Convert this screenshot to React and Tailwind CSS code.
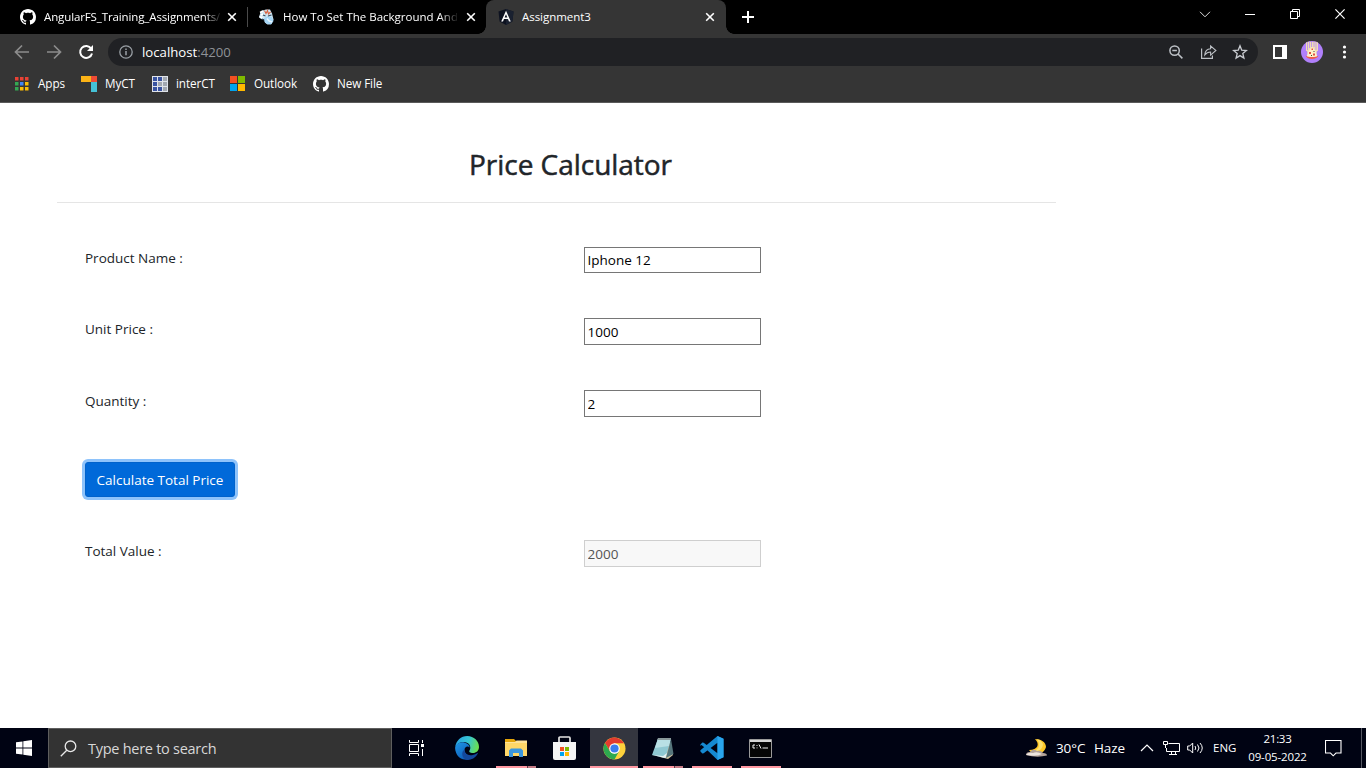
import React from "react";

const GITHUB =
  "M8 0C3.58 0 0 3.58 0 8c0 3.54 2.29 6.53 5.47 7.59.4.07.55-.17.55-.38 0-.19-.01-.82-.01-1.49-2.01.37-2.53-.49-2.69-.94-.09-.23-.48-.94-.82-1.13-.28-.15-.68-.52-.01-.53.63-.01 1.08.58 1.23.82.72 1.21 1.87.87 2.33.66.07-.52.28-.87.51-1.07-1.78-.2-3.64-.89-3.64-3.95 0-.87.31-1.59.82-2.15-.08-.2-.36-1.02.08-2.12 0 0 .67-.21 2.2.82.64-.18 1.32-.27 2-.27s1.36.09 2 .27c1.53-1.04 2.2-.82 2.2-.82.44 1.1.16 1.92.08 2.12.51.56.82 1.27.82 2.15 0 3.07-1.87 3.75-3.65 3.95.29.25.54.73.54 1.48 0 1.07-.01 1.93-.01 2.2 0 .21.15.46.55.38A8.01 8.01 0 0 0 16 8c0-4.42-3.58-8-8-8z";

function Svg({ w, h = w, vb, className = "", children }) {
  return (
    <svg width={w} height={h} viewBox={vb || `0 0 ${w} ${h}`} fill="none" className={"block shrink-0 " + className}>
      {children}
    </svg>
  );
}

function Github() {
  return (
    <Svg w={16}>
      <path d={GITHUB} fill="#fff" />
    </Svg>
  );
}

function CloseTab() {
  return (
    <Svg w={10}>
      <path d="M1.2 1.2 8.8 8.8M8.8 1.2 1.2 8.8" stroke="#fff" strokeWidth="1.6" />
    </Svg>
  );
}

function TabStrip() {
  return (
    <div className="flex h-[34px] w-full bg-black text-[11.5px] leading-[34px] text-white">
      <div className="flex w-[247px] items-center pl-5">
        <Github />
        <div className="ml-2 w-[176px] overflow-hidden whitespace-nowrap tracking-[-0.12px] [mask-image:linear-gradient(to_right,black_160px,transparent_178px)]">
          AngularFS_Training_Assignments/
        </div>
        <div className="ml-[7px]"><CloseTab /></div>
      </div>
      <div className="mt-[7px] h-5 w-px bg-[#4a4a4a]" />
      <div className="flex w-[238px] items-center pl-[11px]">
        <Svg w={16}>
          <path d="M2 2 7 .5h4l2 4 1.500 6-2 4.500-4 .5-4-3L0 8z" fill="#cfe6f3" />
          <path d="m5 9 4-2 4 1 1.500 4-2.500 3.500-4-.5-3-3z" fill="#a6d6f5" />
          <path d="M0 10.500 5 10l1 6H0zM0 4l2-3H0z" fill="#000" />
          <path d="M1 3.500 4 2M.5 8l3 .5M2 6l2-1" stroke="#fff" strokeWidth="1.5" />
          <path d="m5.500 1.500 1.500 3 1.500-3 1 3.500 2-2" stroke="#d9623f" strokeWidth="1.1" />
          <path d="m4 6 2.500 1M9 7l3.500-1M3 10l2 1" stroke="#34495c" strokeWidth="1.1" />
          <path d="m8 9.500 2 2.500 3 1" stroke="#eaf7ff" strokeWidth="1.4" />
        </Svg>
        <div className="ml-2 w-[174px] overflow-hidden whitespace-nowrap [mask-image:linear-gradient(to_right,black_156px,transparent_176px)]">
          How To Set The Background And
        </div>
        <div className="ml-[9px]"><CloseTab /></div>
      </div>
      <div className="relative flex w-60 items-center rounded-t-lg bg-[#353535] pl-3">
        <div className="absolute bottom-0 -left-2 h-2 w-2 bg-[radial-gradient(circle_at_0_0,#000_7.5px,#353535_8px)]" />
        <div className="absolute -right-2 bottom-0 h-2 w-2 bg-[radial-gradient(circle_at_100%_0,#000_7.5px,#353535_8px)]" />
        <Svg w={16}>
          <path d="m8 0 7.500 2.600-1.100 10L8 16l-6.400-3.400L.5 2.600z" fill="#0d1220" />
          <path d="m8 0 7.500 2.600-1.100 10L8 16z" fill="#1a2130" />
          <path d="M8 1.800 3.200 12.500H5l1-2.400h4l1 2.400h1.800zm0 3.400 1.400 3.400H6.600z" fill="#fff" fillRule="evenodd" />
        </Svg>
        <span className="ml-2 w-[174px] tracking-[-0.05px]">Assignment3</span>
        <div className="ml-[9px]"><CloseTab /></div>
      </div>
      <div className="flex w-[44px] items-center justify-center">
        <Svg w={12}>
          <path d="M6 0v12M0 6h12" stroke="#fff" strokeWidth="2" />
        </Svg>
      </div>
      <div className="ml-auto flex w-[180px] items-start pt-2">
        <div className="flex w-[40px] justify-center pt-[3px]">
          <Svg w={12} h={7}><path d="m1 .8 5 5 5-5" stroke="#ddd" /></Svg>
        </div>
        <div className="flex w-[52px] justify-center pt-[6px]">
          <div className="h-px w-[10px] bg-white" />
        </div>
        <div className="flex w-[40px] justify-center pt-px">
          <Svg w={10}><path d="M.5 2.500h7v7h-7zM2.500 2.500v-2h7v7h-2" stroke="#fff" /></Svg>
        </div>
        <div className="flex w-[52px] shrink-0 justify-center pt-px">
          <Svg w={10}><path d="m.4.4 9.200 9.200M9.600.4.4 9.600" stroke="#fff" strokeWidth="1.200" /></Svg>
        </div>
      </div>
    </div>
  );
}

function AddressRow() {
  return (
    <div className="flex h-9 w-full items-center pl-[14px]">
      <Svg w={16}><path d="M15 8H2M8 1.500 1.500 8 8 14.500" stroke="#8c8c8c" strokeWidth="1.7" /></Svg>
      <Svg w={16} className="ml-4"><path d="M1 8h13M8 1.500 14.500 8 8 14.500" stroke="#8c8c8c" strokeWidth="1.7" /></Svg>
      <Svg w={16} className="ml-4">
        <path d="M13.200 4.600A6 6 0 1 0 14 9.400" stroke="#fff" strokeWidth="2" />
        <path d="M15 1v6H9z" fill="#fff" />
      </Svg>
      <div className="ml-[14px] flex h-7 w-[1150px] items-center rounded-full bg-[#202124] pl-[11px]">
        <Svg w={14}>
          <circle cx="7" cy="7" r="6.200" stroke="#9aa0a6" strokeWidth="1.3" />
          <path d="M7 6v4.300M7 3.500V5" stroke="#9aa0a6" strokeWidth="1.5" />
        </Svg>
        <div className="ml-[9px] pt-px text-[13.2px] text-white">
          localhost<span className="text-[#8f9297]">:4200</span>
        </div>
        <Svg w={14} className="ml-auto">
          <circle cx="5.600" cy="5.600" r="4.700" stroke="#bdc1c6" strokeWidth="1.5" />
          <path d="M3.300 5.600h4.600M9 9l4.400 4.400" stroke="#bdc1c6" strokeWidth="1.5" />
        </Svg>
        <Svg w={16} className="ml-[18px]">
          <path d="M.6 4.500v9.900h10.800V11.500" stroke="#bdc1c6" strokeWidth="1.2" />
          <path d="M3.800 10.800c.3-3.800 2.300-5.800 5.800-6V1.900l5.300 4.600-5.300 4.600V8c-2.600 0-4.300.8-5.800 2.800z" stroke="#bdc1c6" strokeWidth="1.1" />
        </Svg>
        <Svg w={16} className="mr-[10px] ml-[15px]">
          <path d="m8 1.800 1.700 4.300 4.700.4-3.600 3 1.100 4.500L8 11.600 4.100 14l1.100-4.500-3.600-3 4.700-.4z" stroke="#c8cbd0" strokeWidth="1.3" />
        </Svg>
      </div>
      <Svg w={14} className="ml-[15px]">
        <path d="M0 0h14v14H0zm2 2v10h7V2z" fill="#fff" fillRule="evenodd" />
      </Svg>
      <Svg w={22} className="ml-[14px]">
        <circle cx="11" cy="11" r="11" fill="#b080fb" />
        <path d="M5 1.500 7 .8h8l2 .7V10h-1l-1 5H7l-1-5H5z" fill="#efdcb4" />
        <path d="M6.500 1v8M8.500 0v7M10.500 0v6M13 0v6M15 1v8" stroke="#b080fb" strokeWidth=".7" />
        <path d="m5.500 16 2-6L11 6l3.500 4 2 6z" fill="#fff0c9" />
        <path d="M8 11h2v2H8zM12 12.500h2v2h-2zM10.500 7.500H12V9h-1.500z" fill="#e25241" />
        <path d="M10 14h1v1h-1zM12.500 10h1v1h-1z" fill="#3a4a3a" />
        <path d="M4.500 14.500c1 4.500 12 4.500 13 0-3 2-10 2-13 0z" fill="#ef5a4c" />
      </Svg>
      <Svg w={5} h={14} className="ml-[19px]">
        <circle cx="2.500" cy="2" r="1.6" fill="#fff" />
        <circle cx="2.500" cy="7" r="1.6" fill="#fff" />
        <circle cx="2.500" cy="12" r="1.6" fill="#fff" />
      </Svg>
    </div>
  );
}

function Bookmark({ className, label, children }) {
  return (
    <div className={"flex items-center whitespace-nowrap " + className}>
      {children}
      <span>{label}</span>
    </div>
  );
}

function Bookmarks() {
  const dots = ["#e94235", "#e94235", "#e94235", "#34a853", "#4285f4", "#fbbc05", "#34a853", "#fbbc05", "#fbbc05"];
  return (
    <div className="flex h-[33px] w-full items-center border-b border-[#5a5a5a] pb-1 text-[11.7px] tracking-[-0.08px] text-white">
      <Bookmark className="ml-[15px] w-[66px] gap-[9px]" label="Apps">
        <Svg w={14}>
          {dots.map((c, i) => (
            <rect key={i} x={(i % 3) * 5} y={Math.floor(i / 3) * 5} width="3.500" height="3.500" fill={c} />
          ))}
        </Svg>
      </Bookmark>
      <Bookmark className="w-[71px] gap-2" label="MyCT">
        <Svg w={16}>
          <path d="M0 0h10v6H0z" fill="#fcb316" />
          <path d="M10 0h6v6h-6z" fill="#ee4b35" />
          <path d="M10 6h6v10h-6z" fill="#45c1d6" />
        </Svg>
      </Bookmark>
      <Bookmark className="w-[78px] gap-2" label="interCT">
        <Svg w={16}>
          <path d="M0 0h16v16H0z" fill="#dfe3ea" />
          <path d="M1 1h4v4H1zM6 1h4v4H6zM1 6h4v4H1zM1 11h4v4H1zM6 11h4v4H6z" fill="#3953a0" />
          <path d="M11 1h4v4h-4zM6 6h4v4H6zM11 6h4v4h-4zM11 11h4v4h-4z" fill="#a2a8b0" />
        </Svg>
      </Bookmark>
      <Bookmark className="w-[83px] gap-[9px]" label="Outlook">
        <Svg w={15}>
          <path d="M0 0h7v7H0z" fill="#f25022" />
          <path d="M8 0h7v7H8z" fill="#7fba00" />
          <path d="M0 8h7v7H0z" fill="#00a4ef" />
          <path d="M8 8h7v7H8z" fill="#ffb900" />
        </Svg>
      </Bookmark>
      <Bookmark className="gap-2" label="New File"><Github /></Bookmark>
    </div>
  );
}

function Field({ label, value, className, inputClass = "h-[27px] pt-px", disabled }) {
  return (
    <div className={"flex items-start text-[#212529] " + className}>
      <label className="w-[499px] pt-px text-[13.500px] leading-[21px]">{label}</label>
      <input
        readOnly
        disabled={disabled}
        defaultValue={value}
        className={
          "w-[177px] border border-[#767676] bg-white px-[2.5px] text-[13.500px] leading-[21px] text-black outline-none disabled:border-[#cfcfcf] disabled:bg-[#f8f8f8] disabled:text-[#545454] " +
          inputClass
        }
      />
    </div>
  );
}

function Calculator() {
  return (
    <main className="h-[625px] w-full bg-white">
      <div className="ml-[57px] w-[999px]">
        <div className="h-[100px] border-b border-[#e5e5e5] pt-[42px] pl-[412px]">
          <h1 className="text-[28px] leading-[39px] tracking-[-0.03px] whitespace-nowrap text-[#212529] [-webkit-text-stroke:0.5px_#212529]">Price Calculator</h1>
        </div>
        <form className="pl-7">
          <Field className="mt-[44px] h-[27px]" label="Product Name :" value="Iphone 12" inputClass="h-[26px] pb-px" />
          <Field className="mt-[44px]" label="Unit Price :" value="1000" />
          <Field className="mt-[45px]" label="Quantity :" value="2" />
          <button
            type="button"
            className="mt-[45px] block h-[35px] w-[150px] rounded-[3px] border border-[#0062cc] bg-[#0069d9] pt-px text-[13.500px] leading-[20px] whitespace-nowrap text-white shadow-[0_0_0_3px_#8ec3fb]"
          >
            Calculate Total Price
          </button>
          <Field className="mt-[43px]" label="Total Value :" value="2000" disabled />
        </form>
      </div>
    </main>
  );
}

function TaskItem({ className = "", bar, children }) {
  return (
    <div className={"flex h-10 flex-col items-center " + className}>
      <div className="flex h-[38px] items-center pt-[2px]">{children}</div>
      {bar && (
        <div className={"flex h-[2px] bg-[#ff98a2] " + (bar === "full" ? "w-full" : "w-10")}>
          {bar === "split" && <div className="ml-auto w-[9px] border-l border-[#5a3c48] bg-[#c57b86]" />}
        </div>
      )}
    </div>
  );
}

function Taskbar() {
  return (
    <footer className="flex h-10 w-full bg-[#000313] text-white">
      <div className="flex w-12 items-center justify-center">
        <Svg w={16}>
          <path d="M0 2.300 6.500 1.400v6.200H0zM7.300 1.300 16 0v7.600H7.300zM0 8.400h6.500v6.200L0 13.700zM7.300 8.400H16V16l-8.700-1.300z" fill="#fff" />
        </Svg>
      </div>
      <div className="flex w-[344px] items-center border border-[#5e5e5e] bg-[#333] pl-[11px]">
        <Svg w={17}>
          <circle cx="10.500" cy="6.300" r="5.300" stroke="#e8e8e8" strokeWidth="1.300" />
          <path d="M6.800 10.200.8 16.200" stroke="#e8e8e8" strokeWidth="1.300" />
        </Svg>
        <span className="ml-[11px] pt-px text-[14.500px] tracking-[-0.27px] text-[#d8d8d8]">Type here to search</span>
      </div>
      <TaskItem className="w-12">
        <Svg w={17}>
          <path d="M1.500 0v2.500h9V0M1.500 16v-2.500h9V16M1.500 4.500h9v7h-9zM14.500 0v3M14.500 9v7" stroke="#fff" />
          <path d="M13 4h3v3h-3z" fill="#fff" />
        </Svg>
      </TaskItem>
      <TaskItem className="w-[54px]">
        <Svg w={24}>
          <defs>
            <linearGradient id="edgeTop" x1="2" y1="5" x2="23" y2="11" gradientUnits="userSpaceOnUse">
              <stop stopColor="#2ba7e0" /><stop offset=".5" stopColor="#36c5d4" /><stop offset="1" stopColor="#6be04e" />
            </linearGradient>
            <linearGradient id="edgeLow" x1="0" y1="8" x2="12" y2="24" gradientUnits="userSpaceOnUse">
              <stop stopColor="#1d93e4" /><stop offset="1" stopColor="#0c57b4" />
            </linearGradient>
          </defs>
          <path d="M.2 11C1.200 4.500 6 0 12.200 0 19 0 24 5 24 11c0 3.700-2.800 6-6 6-3 0-4.500-1.200-3.500-2.500 1.800-2.500.8-7.500-4.200-8.300C6 5.500 2 7.500.2 11z" fill="url(#edgeTop)" />
          <path d="M.2 11C1.500 7.300 5.500 5.500 9.500 6.500c3.500.9 5 3 5.200 5-2-2-5.200-.7-5.200 2.500 0 4 4.500 7 9.500 6.300C14.500 25.500 4 25 1 16.500.2 14.500 0 12.800.2 11z" fill="url(#edgeLow)" />
          <path d="M9.500 13.500c-.5 5 5.500 8 12.500 3.700.6-.3 1 .1.700.6-2.500 4.500-6.500 6.300-10.700 6.200C7 23 5.500 16.500 9.500 13.500z" fill="#13489c" />
        </Svg>
      </TaskItem>
      <TaskItem bar="split" className="w-[44px]">
        <Svg w={22} h={18}>
          <path d="M0 0h9l2 2v3H0z" fill="#e5a50a" />
          <path d="M0 3h22v14H0z" fill="#ffd768" />
          <path d="M0 3h10l1.500-1.500H22V4H0z" fill="#ffe39a" />
          <path d="M4 18v-6.500L6 9.500h10l2 2V18h-4v-4H8v4z" fill="#3b96dd" />
        </Svg>
      </TaskItem>
      <TaskItem className="w-[52px]">
        <Svg w={23} h={24}>
          <path d="M6 7V2q0-1 1-1h9q1 0 1 1v5" stroke="#e5e5e5" strokeWidth="1.700" />
          <path d="M0 6h23v16q0 2-2 2H2q-2 0-2-2z" fill="#f5f5f5" />
          <path d="M7 11h4v4H7z" fill="#f25022" /><path d="M12 11h4v4h-4z" fill="#7fba00" />
          <path d="M7 16h4v4H7z" fill="#00a4ef" /><path d="M12 16h4v4h-4z" fill="#ffb900" />
        </Svg>
      </TaskItem>
      <TaskItem bar="full" className="w-12 bg-[#34363f]">
        <Svg w={23} vb="0 0 48 48">
          <circle cx="24" cy="24" r="23" fill="#fdd13c" />
          <path d="M24 13h19.900A23 23 0 0 0 4.100 12.500L14.500 29.500z" fill="#e33b2e" />
          <path d="M4.100 12.500A23 23 0 0 0 24 47l9.500-17.500L24 35l-9.500-5.500z" fill="#2da94f" />
          <circle cx="24" cy="24" r="11" fill="#fff" />
          <circle cx="24" cy="24" r="8.600" fill="#3b7ded" />
        </Svg>
      </TaskItem>
      <TaskItem bar="split" className="ml-[4px] w-[42px]">
        <Svg w={24} h={22}>
          <path d="m18 2 4 16-5 4-8-2z" fill="#d3c5a0" />
          <path d="M7 1.500 20 2l-5.500 19L1 18z" fill="#8fc8d2" />
          <path d="M7 1.500 20 2l-2 7L4 11z" fill="#b9e0e5" />
          <path d="m1 18 13.500 3 1.500-5-4 3z" fill="#e7f1f1" />
          <path d="M7 1h13v2H6.500z" fill="#89999b" />
          <path d="m20 2 2.500 15-7.500 4z" fill="#56767c" />
        </Svg>
      </TaskItem>
      <TaskItem bar="single" className="ml-[5px] w-[46px]">
        <Svg w={24}>
          <path d="m17.500 0 6 2.800v18.400l-6 2.800L4 11 1.500 9 .3 9.700v-.9l2-2.200 1.400.1L17.500 17.300V6.700L3.700 17.300l-1.400.1-2-2.200.1-1L17.500 0z" fill="#1589d1" />
          <path d="m17.500 0 6 2.800v18.400l-6 2.800z" fill="#29a5ed" />
        </Svg>
      </TaskItem>
      <TaskItem bar="single" className="ml-px w-[50px]">
        <Svg w={23} h={19} className="mr-px">
          <path d="M.5.500h22v18H.5z" fill="#050505" stroke="#9a9a9a" />
          <path d="M1 1h21v2H1z" fill="#d5d5d5" />
          <path d="M6 6H4v3h2M8 6v1M8 8.500v.8M10 5.500l2 4M13.500 9h5.500" stroke="#f1f1f1" />
        </Svg>
      </TaskItem>
      <div className="ml-auto flex h-10 w-[342px] items-center whitespace-nowrap">
        <Svg w={24} h={20}>
          <path d="M11 1c5 5 3 11-6 11 4 6 15 5 17-3 0-5-5-8-11-8z" fill="#ffc928" />
          <path d="M13 1c4 6 2 11-4 12 6 2 10-3 10-7q-2-4-6-5z" fill="#ffe16d" />
          <path d="M2 17q0-3 4-3 3-4 7-1 4-1 6 2 4 0 4 2.500Q13 20 2 17z" fill="#b3a39a" />
          <path d="M2 17q2-3 7-2 4-2 9 1-5 3-16 1z" fill="#eee6df" />
        </Svg>
        <span className="ml-2 w-[38px] pt-px text-[13.500px] tracking-[-0.1px]">30°C</span>
        <span className="w-[46px] pt-px text-[13.500px] tracking-[-0.1px]">Haze</span>
        <Svg w={14} h={8}><path d="m1 7 6-6 6 6" stroke="#fff" strokeWidth="1.200" /></Svg>
        <Svg w={17} h={15} className="ml-[9px]">
          <path d="M5.500 2.500h11v8h-13V7M.5.500h4v3h-4zM2.500 3.500V7M8.500 10.500v3M12.500 10.500v3M6 13.500h8" stroke="#fff" />
        </Svg>
        <Svg w={18} h={14} className="ml-[7px]">
          <path d="M.7 5h2l3-3v10l-3-3h-2zM8 5q1.500 2 0 4M10.500 3.500q3 3.500 0 7M13 2q4.500 5 0 10" stroke="#fff" />
        </Svg>
        <span className="ml-[8px] w-[31px] text-[11.500px]">ENG</span>
        <div className="flex w-[66px] flex-col items-center pl-px text-[11.500px] leading-[18px]">
          <span className="tracking-[-0.3px]">21:33</span>
          <span className="tracking-[-0.15px]">09-05-2022</span>
        </div>
        <Svg w={17} h={17} className="ml-[15px]">
          <path d="M.5.500h15.500v12.500h-5l-2.800 2.800L5.500 13h-5z" stroke="#fff" strokeWidth="1.100" />
        </Svg>
        <div className="mr-1 ml-auto h-10 w-px bg-[#555762]" />
      </div>
    </footer>
  );
}

export default function App() {
  return (
    <div className="flex h-[768px] w-[1366px] flex-col overflow-hidden bg-white font-['Open_Sans','Noto_Sans',sans-serif]">
      <header className="bg-[#353535]">
        <TabStrip />
        <AddressRow />
        <Bookmarks />
      </header>
      <Calculator />
      <Taskbar />
    </div>
  );
}
